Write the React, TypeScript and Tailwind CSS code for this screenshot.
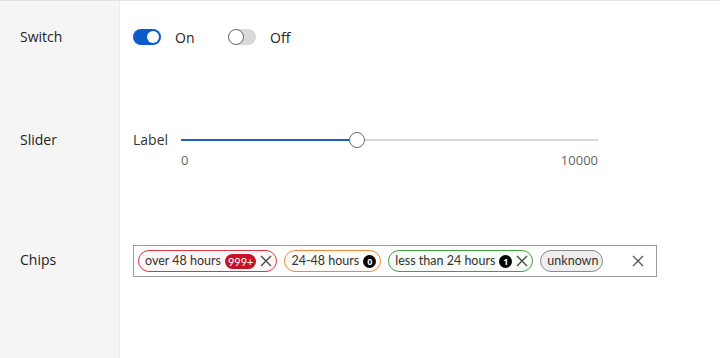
import React from 'react';

function X({ size = 12, className = '' }: { size?: number; className?: string }) {
  return (
    <svg width={size} height={size} viewBox="0 0 12 12" className={`shrink-0 ${className}`}>
      <path d="M1 1 L11 11 M11 1 L1 11" stroke="currentColor" strokeWidth="1.3" fill="none" />
    </svg>
  );
}

function Toggle({ on }: { on: boolean }) {
  return on ? (
    <div className="relative w-[28px] h-[16px] rounded-full bg-[#0b5cc8]">
      <div className="absolute right-[2px] top-[2px] w-[12px] h-[12px] rounded-full bg-white" />
    </div>
  ) : (
    <div className="relative w-[28px] h-[16px] rounded-full bg-[#d9d9d9]">
      <div className="absolute left-0 top-0 w-[16px] h-[16px] rounded-full bg-white border-[1.5px] border-[#6b6b6b]" />
    </div>
  );
}

type ChipProps = {
  label: string;
  border: string;
  count?: string;
  badge?: 'red' | 'black';
  removable?: boolean;
};

function Chip({ label, border, count, badge, removable }: ChipProps) {
  return (
    <div className={`shrink-0 whitespace-nowrap flex items-center h-[22px] rounded-full border pl-[6px] pr-[4px] gap-[4px] ${border}`}>
      <span className="text-[12.5px] text-[#333] font-['Lato',sans-serif]">{label}</span>
      {count &&
        (badge === 'red' ? (
          <span className="h-[15px] px-[3px] rounded-full bg-[#c4122b] text-white text-[11px] leading-[15px] font-['Lato',sans-serif]">{count}</span>
        ) : (
          <span className="w-[13px] h-[13px] rounded-full bg-black text-white text-[9px] leading-[13px] text-center font-bold">{count}</span>
        ))}
      {removable && <X size={12} className="text-[#444]" />}
    </div>
  );
}

export default function App() {
  return (
    <div className="w-[720px] h-[358px] border-t border-[#e2e2e2] flex text-[#222]" style={{ fontFamily: '"Open Sans", "Noto Sans", sans-serif' }}>
      <div className="w-[120px] bg-[#f5f5f5] border-r border-[#ececec] text-[14px]">
        <div className="h-[72px] pl-[20px] pt-[26px] leading-[20px]">Switch</div>
        <div className="h-[150px] pl-[20px] pt-[57px] leading-[20px]">Slider</div>
        <div className="pl-[20px] pt-[27px] leading-[20px]">Chips</div>
      </div>

      <div className="flex-1 pl-[13px] text-[14px]">
        <div className="h-[72px] flex items-center gap-[14px]">
          <Toggle on />
          <span className="w-[39px]">On</span>
          <Toggle on={false} />
          <span>Off</span>
        </div>

        <div className="h-[150px] pt-[57px]">
          <div className="flex items-center h-[20px]">
            <span className="w-[48px] leading-[20px] text-[#333]">Label</span>
            <div className="relative w-[417px] h-[2px] bg-[#d6d6d6]">
              <div className="absolute left-0 top-0 h-[2px] w-[176px] bg-[#1a5fc4]" />
              <div className="absolute left-[168px] top-[-7px] w-[16px] h-[16px] rounded-full bg-white border-[1.5px] border-[#6e6e6e]" />
            </div>
          </div>
          <div className="flex justify-between w-[417px] ml-[48px] mt-[1px] text-[13px] text-[#666]">
            <span>0</span>
            <span>10000</span>
          </div>
        </div>

        <div className="pt-[22px]">
          <div className="w-[524px] h-[32px] border border-[#9a9a9a] flex items-center pl-[4px] pr-[12px] gap-[7px]">
            <Chip label="over 48 hours" border="border-[#dc3545] bg-[#fff6f7]" count="999+" badge="red" removable />
            <Chip label="24-48 hours" border="border-[#f08a3a] bg-[#fffaf6]" count="0" badge="black" />
            <Chip label="less than 24 hours" border="border-[#43a047] bg-[#f6fbf6]" count="1" badge="black" removable />
            <Chip label="unknown" border="border-[#8a8a8a] bg-[#eeeeee]" />
            <div className="flex-1" />
            <X size={12} className="text-[#555]" />
          </div>
        </div>
      </div>
    </div>
  );
}
